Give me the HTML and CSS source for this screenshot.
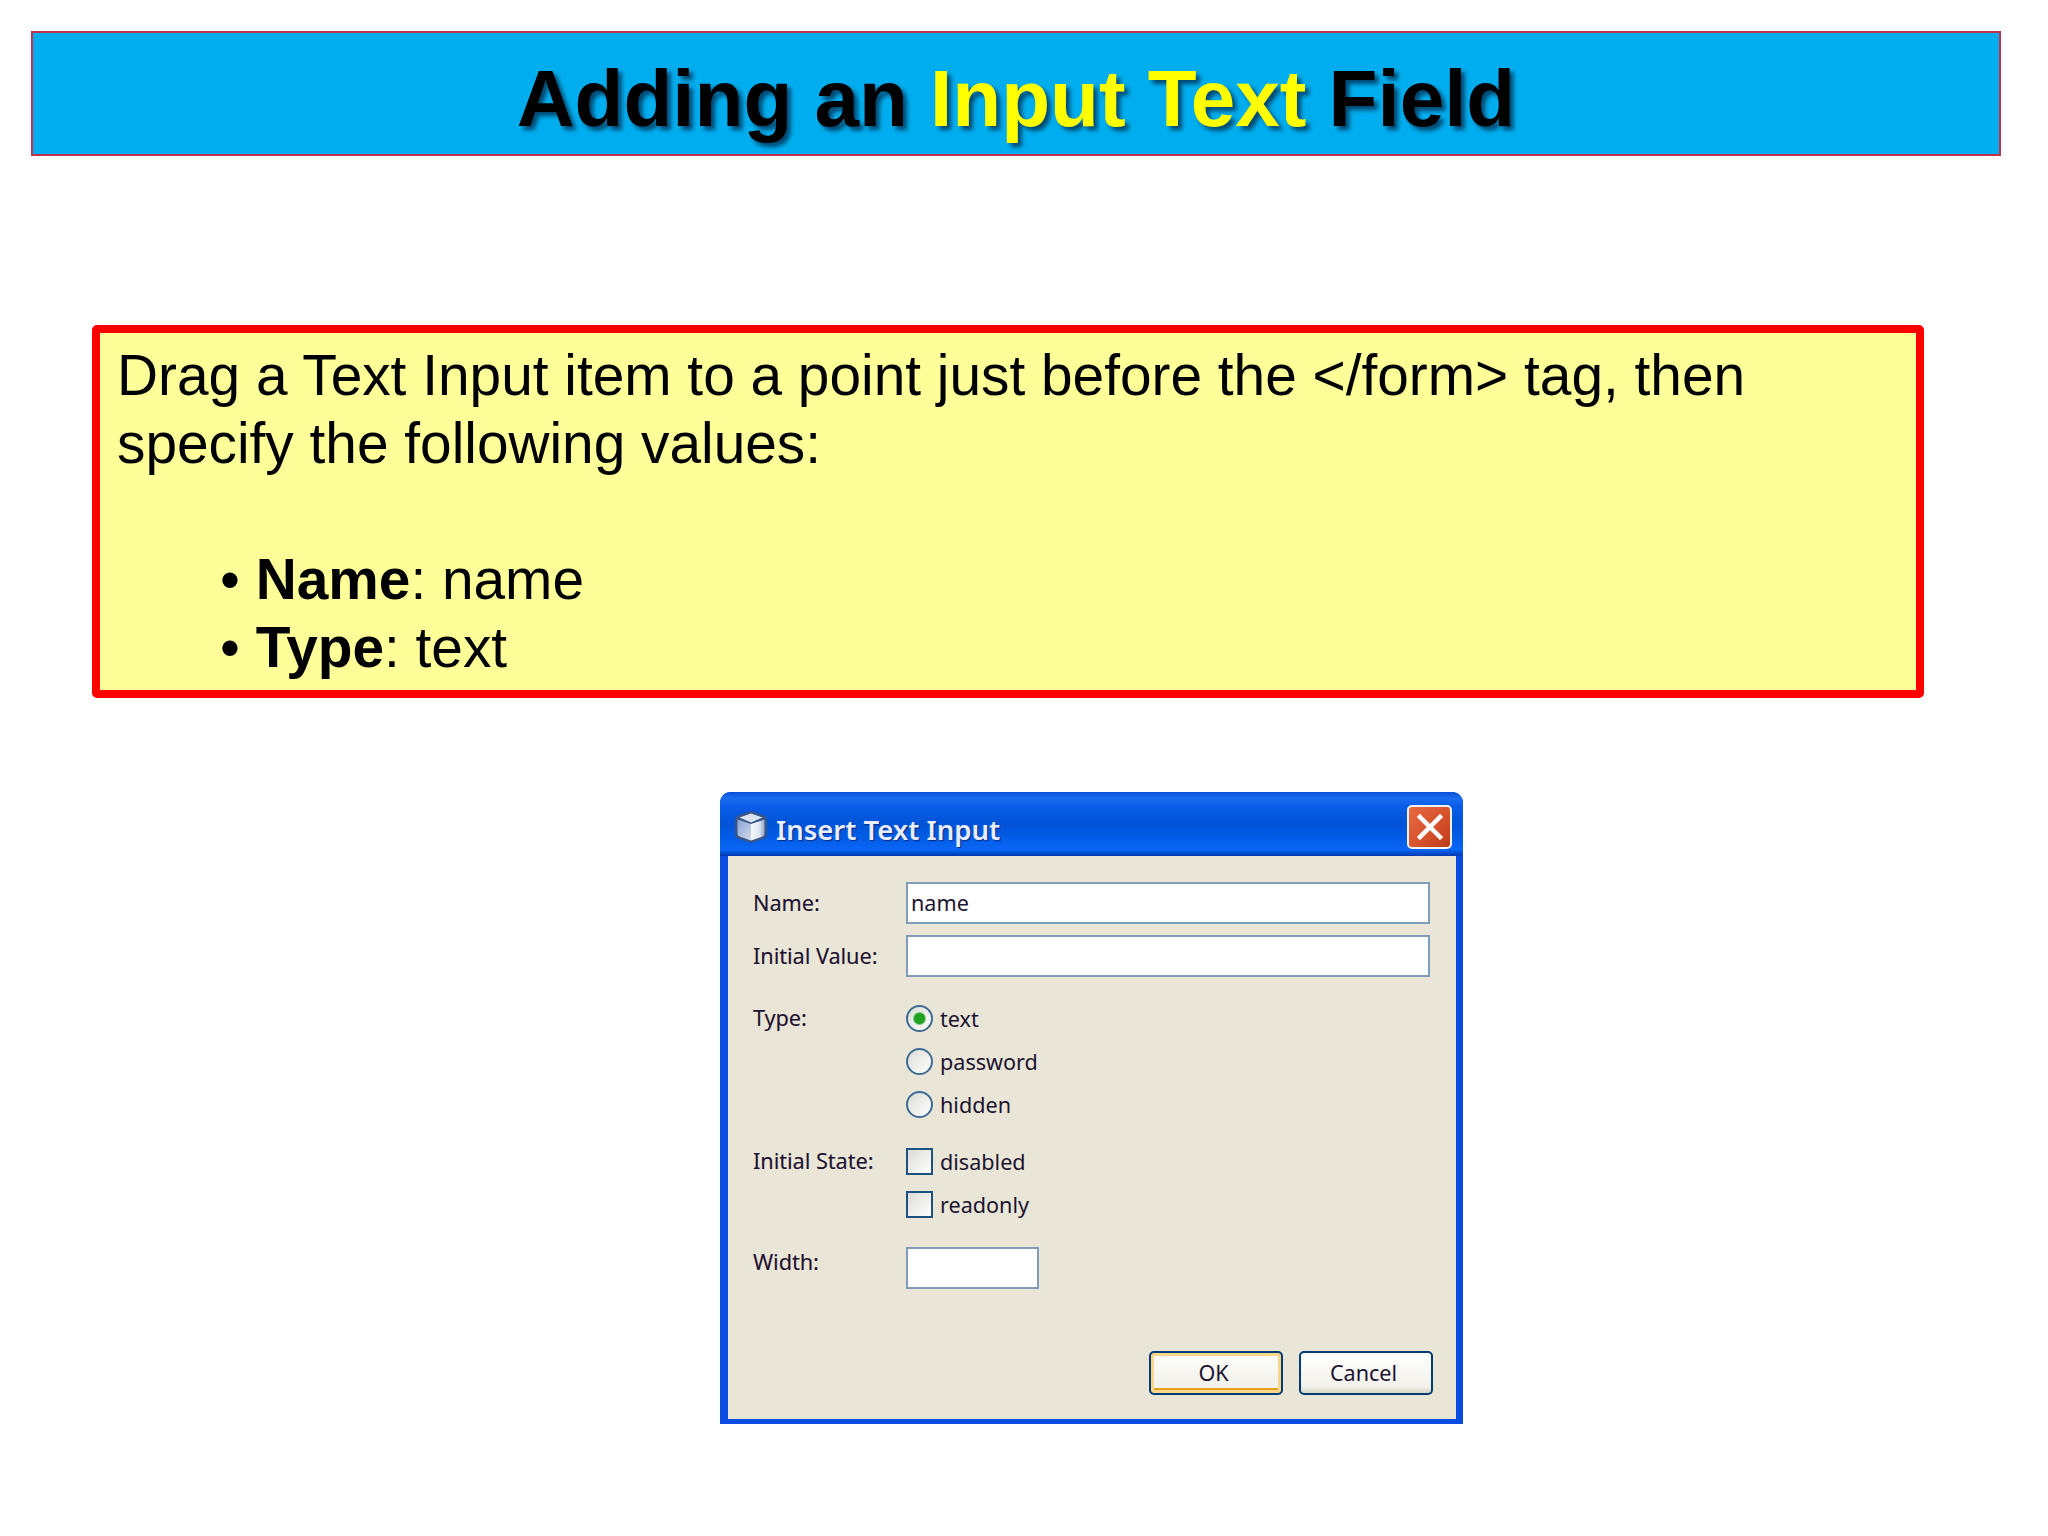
FILE: index.html
```html
<!DOCTYPE html>
<html lang="en">
<head>
    <meta charset="UTF-8">
    <title>Adding an Input Text Field</title>
    <link rel="stylesheet" href="styles.css">
</head>
<body>
    <!-- Slide header -->
    <header class="slide-title">
        <h1>Adding an <span class="accent">Input Text</span> Field</h1>
    </header>

    <!-- Instruction box -->
    <section class="note">
        <p>Drag a Text Input item to a point just before the &lt;/form&gt; tag, then<br>specify the following values:</p>
        <ul>
            <li><b>Name</b>: name</li>
            <li><b>Type</b>: text</li>
        </ul>
    </section>

    <!-- XP style dialog -->
    <div class="dialog">
        <div class="titlebar">
            <svg class="cube" width="34" height="34" viewBox="0 0 34 34">
                <defs>
                    <linearGradient id="cubeLeft" x1="0" y1="0" x2="1" y2="1">
                        <stop offset="0" stop-color="#8ba3d2"/>
                        <stop offset="1" stop-color="#cfdaee"/>
                    </linearGradient>
                    <linearGradient id="cubeRight" x1="0" y1="0" x2="1" y2="0">
                        <stop offset="0" stop-color="#f4f8fc"/>
                        <stop offset="0.6" stop-color="#dfe8f3"/>
                        <stop offset="1" stop-color="#93a8cb"/>
                    </linearGradient>
                </defs>
                <path d="M17 1 L29 5 Q33 6.5 33 10 L33 24 Q33 27.5 29 29 L17 33 L5 29 Q1 27.5 1 24 L1 10 Q1 6.5 5 5 Z" fill="#3a5588"/>
                <path d="M17 3.5 L28.5 7.5 L17 12.5 L5.5 7.5 Z" fill="#d9e3f1"/>
                <path d="M3.5 9.5 L17 14 L17 30.5 L6 26.8 Q3.5 25.8 3.5 24 Z" fill="url(#cubeLeft)"/>
                <path d="M30.5 9.5 L17 14 L17 30.5 L28 26.8 Q30.5 25.8 30.5 24 Z" fill="url(#cubeRight)"/>
            </svg>
            <span class="titlebar-text">Insert Text Input</span>
            <span class="close-btn">
                <svg width="26" height="26" viewBox="0 0 26 26">
                    <path d="M3 3 L23 23 M23 3 L3 23" stroke="#fff" stroke-width="4.5" stroke-linecap="square" fill="none"/>
                </svg>
            </span>
        </div>
        <form class="dialog-body">
            <div class="row">
                <label class="row-label">Name:</label>
                <input class="field" type="text" value="name" readonly>
            </div>
            <div class="row row-value">
                <label class="row-label">Initial Value:</label>
                <input class="field" type="text" readonly>
            </div>
            <div class="row row-type">
                <span class="row-label">Type:</span>
                <div class="options">
                    <label class="option"><input type="radio" name="kind" checked> text</label>
                    <label class="option"><input type="radio" name="kind"> password</label>
                    <label class="option"><input type="radio" name="kind"> hidden</label>
                </div>
            </div>
            <div class="row row-state">
                <span class="row-label">Initial State:</span>
                <div class="options">
                    <label class="option"><input type="checkbox"> disabled</label>
                    <label class="option"><input type="checkbox"> readonly</label>
                </div>
            </div>
            <div class="row row-width">
                <label class="row-label label-top">Width:</label>
                <input class="field field-short" type="text" readonly>
            </div>
            <div class="actions">
                <button type="button" class="btn btn-default">OK</button>
                <button type="button" class="btn">Cancel</button>
            </div>
        </form>
    </div>
</body>
</html>
```

FILE: styles.css
```css
/* Page */
body {
    margin: 0;
    padding: 31px 47px 0 31px;
    background-color: #fff;
    color: #000;
    font-family: "Liberation Sans", Arial, sans-serif;
}

/* Slide header */
.slide-title {
    height: 125px;
    box-sizing: border-box;
    padding-top: 10px;
    border: 2px solid #c2304f;
    background-color: #00aeef;
    display: flex;
    align-items: center;
    justify-content: center;
}

.slide-title h1 {
    margin: 0;
    font-size: 80px;
    font-weight: bold;
    line-height: 1;
    text-shadow: 4px 4px 4px rgba(0, 30, 60, 0.7);
}

.accent {
    color: #ff0;
}

/* Instruction box */
.note {
    margin: 169px 0 0 61px;
    width: 1832px;
    box-sizing: border-box;
    padding: 9px 16px 8px 17px;
    border: 8px solid #f00;
    border-radius: 5px;
    background-color: #ffff99;
    font-size: 56.8px;
    line-height: 68px;
}

.note p {
    margin: 0 0 68px;
}

.note ul {
    margin: 0;
    padding: 0 0 0 103px;
    list-style: none;
}

.note li::before {
    content: "\2022\00a0";
}

/* Dialog */
.dialog {
    margin: 94px 0 0 689px;
    width: 743px;
    box-sizing: border-box;
    padding: 0 7px 5px 8px;
    background-color: #0a4be0;
    border-radius: 11px 11px 0 0;
    font-family: "Noto Sans", Tahoma, sans-serif;
    font-size: 21.6px;
    color: #1c1430;
}

.titlebar {
    height: 64px;
    margin: 0 -7px 0 -8px;
    padding: 5px 11px 0 14px;
    box-sizing: border-box;
    display: flex;
    align-items: center;
    border-radius: 11px 11px 0 0;
    background: linear-gradient(#0a50d8 0%, #1a6cf0 10%, #0a5de6 22%, #0153d8 50%, #0560ec 80%, #0a66f4 90%, #0038b0 100%);
}

.cube {
    flex: none;
}

.titlebar-text {
    margin: 5px 0 0 8px;
    font-size: 27.5px;
    font-weight: 600;
    color: #e6eeff;
    text-shadow: 1px 1px 1px #0a2a80;
}

.close-btn {
    margin-left: auto;
    width: 45px;
    height: 44px;
    box-sizing: border-box;
    border: 2px solid #f2f2f2;
    border-radius: 5px;
    background: linear-gradient(135deg, #e86a42, #d4502a 60%, #bc3c18);
    display: flex;
    align-items: center;
    justify-content: center;
}

.dialog-body {
    height: 563px;
    box-sizing: border-box;
    padding: 26px 23px 0 25px;
    background-color: #e9e6d7;
    display: flex;
    flex-direction: column;
}

.row {
    display: grid;
    grid-template-columns: 153px 1fr;
    align-items: center;
}

.row-value {
    margin-top: 11px;
}

.row-type {
    margin-top: 28px;
    align-items: start;
}

.row-state {
    margin-top: 30px;
    align-items: start;
}

.row-width {
    margin-top: 29px;
    align-items: start;
}

.row-type .row-label,
.row-state .row-label {
    line-height: 26px;
}

.label-top {
    line-height: 29px;
}

.row-label {
    padding-bottom: 2px;
    text-shadow: 0.5px 0 0 rgba(140, 0, 70, 0.25);
}

/* Fields */
.field {
    width: 524px;
    height: 42px;
    box-sizing: border-box;
    margin: 0;
    padding: 0 3px 2px;
    border: 2px solid #7f9db9;
    border-radius: 0;
    background-color: #fff;
    font: inherit;
    color: inherit;
    outline: none;
}

.field-short {
    width: 133px;
}

/* Radio and checkbox rows */
.options {
    display: flex;
    flex-direction: column;
    gap: 16px;
}

.option {
    height: 27px;
    display: flex;
    align-items: center;
    gap: 7px;
    line-height: 26px;
}

.option input {
    appearance: none;
    flex: none;
    width: 27px;
    height: 27px;
    box-sizing: border-box;
    margin: 0;
    border: 2px solid #1c5180;
    background: linear-gradient(135deg, #dcdcd6, #fff);
}

.option input[type="radio"] {
    border-radius: 50%;
    border-color: #3f6c94;
}

.option input[type="radio"]:checked {
    background: radial-gradient(circle, #21a121 0, #21a121 5px, #7fcf7f 6px, transparent 7px), linear-gradient(135deg, #dcdcd6, #fff);
}

/* Buttons */
.actions {
    margin-top: 62px;
    display: flex;
    justify-content: flex-end;
    gap: 16px;
}

.btn {
    width: 134px;
    height: 44px;
    box-sizing: border-box;
    margin: 0;
    padding: 0 5px 2px 0;
    border: 2px solid #003c74;
    border-radius: 5px;
    background: linear-gradient(#fff, #f2f1ea 85%, #d8d5c8);
    font: inherit;
    color: inherit;
}

.btn-default {
    box-shadow: inset 0 0 0 3px #fbd68a, inset 0 -3px 0 2px #e8a020;
    background: linear-gradient(#fdfdfb, #f0efe8);
}
```
